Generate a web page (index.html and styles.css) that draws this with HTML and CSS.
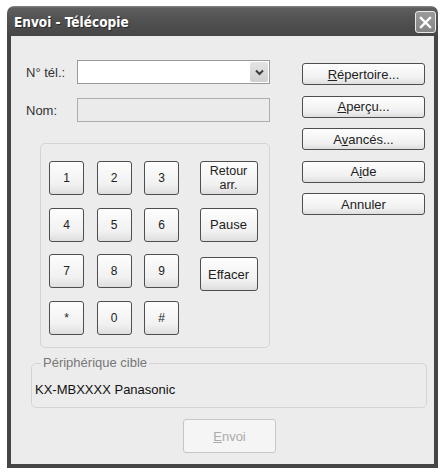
FILE: index.html
```html
<!DOCTYPE html>
<html lang="fr">
<head>
    <meta charset="UTF-8">
    <title>Envoi - Télécopie</title>
    <link rel="stylesheet" href="styles.css">
</head>
<body>

    <div class="window">
        <div class="titlebar">
            <span class="title">Envoi - Télécopie</span>
            <button class="close">
                <svg width="13" height="13" viewBox="0 0 13 13">
                    <path d="M2 2 L11 11 M11 2 L2 11" stroke="#fff" stroke-width="2.4" stroke-linecap="square"/>
                </svg>
            </button>
        </div>

        <div class="body">
            <div class="main">
                <div class="left">
                    <div class="field">
                        <label>N° tél.:</label>
                        <div class="combo">
                            <span class="combo-btn">
                                <svg width="9" height="7" viewBox="0 0 9 7">
                                    <path d="M1 1.5 L4.5 5 L8 1.5" fill="none" stroke="#3c3c3c" stroke-width="2"/>
                                </svg>
                            </span>
                        </div>
                    </div>
                    <div class="field">
                        <label>Nom:</label>
                        <div class="textbox"></div>
                    </div>

                    <!-- clavier -->
                    <div class="keypad">
                        <button class="key">1</button>
                        <button class="key">2</button>
                        <button class="key">3</button>
                        <button class="key wide two-lines">Retour<br>arr.</button>
                        <button class="key">4</button>
                        <button class="key">5</button>
                        <button class="key">6</button>
                        <button class="key wide">Pause</button>
                        <button class="key">7</button>
                        <button class="key">8</button>
                        <button class="key">9</button>
                        <button class="key wide clear">Effacer</button>
                        <button class="key">*</button>
                        <button class="key">0</button>
                        <button class="key">#</button>
                    </div>
                </div>

                <div class="side">
                    <button class="btn"><u>R</u>épertoire...</button>
                    <button class="btn"><u>A</u>perçu...</button>
                    <button class="btn">A<u>v</u>ancés...</button>
                    <button class="btn">A<u>i</u>de</button>
                    <button class="btn">Annuler</button>
                </div>
            </div>

            <fieldset class="target">
                <legend>Périphérique cible</legend>
                <div class="device">KX-MBXXXX Panasonic</div>
            </fieldset>

            <div class="footer">
                <button class="btn send" disabled><u>E</u>nvoi</button>
            </div>
        </div>
    </div>

</body>
</html>
```

FILE: styles.css
```css
body {
    margin: 0;
    background: #ffffff;
    font-family: "Liberation Sans", Arial, sans-serif;
    font-size: 13px;
    color: #222;
}
.window {
    margin: 6px 0 0 7px;
    width: 431px;
    display: flex;
    flex-direction: column;
}
.titlebar {
    height: 30px;
    box-sizing: border-box;
    border-radius: 7px 7px 0 0;
    background: linear-gradient(#8a8a8a 0, #5e5e5e 2px, #535353 40%, #464646 100%);
    display: flex;
    align-items: center;
    padding: 0 2px 0 7px;
}
.title {
    color: #ffffff;
    font-family: "DejaVu Sans Condensed", "DejaVu Sans", sans-serif;
    font-stretch: condensed;
    font-weight: bold;
    font-size: 13.5px;
    text-shadow: 1px 1px 0 #2a2a2a;
    margin-top: 2px;
}
.close {
    margin: 2px 0 0 auto;
    width: 21px;
    height: 22px;
    padding: 0;
    border: 1px solid #e8e8e8;
    border-radius: 3px;
    background: linear-gradient(#9a9a9a, #858585);
    display: flex;
    align-items: center;
    justify-content: center;
}
.body {
    height: 432px;
    box-sizing: border-box;
    border: 4px solid #454545;
    border-top: 0;
    background: #ececec;
}
.main {
    display: flex;
    padding-top: 24px;
}
.left {
    margin-left: 15px;
    width: 276px;
}
.field {
    display: flex;
    align-items: center;
    height: 24px;
}
.field + .field {
    margin-top: 14px;
}
.field label {
    width: 51px;
    color: #333;
}
.combo, .textbox {
    width: 193px;
    height: 24px;
    box-sizing: border-box;
    border: 1px solid #9a9a9a;
}
.combo {
    background: #ffffff;
    display: flex;
    justify-content: flex-end;
    align-items: center;
    padding-right: 1px;
}
.combo-btn {
    width: 18px;
    height: 20px;
    border-radius: 2px;
    background: linear-gradient(#e4e4e4, #d0d0d0);
    display: flex;
    align-items: center;
    justify-content: center;
}
.textbox {
    background: #ebebeb;
    border-color: #adadad;
}
.keypad {
    margin: 21px 0 0 14px;
    width: 230px;
    height: 205px;
    box-sizing: border-box;
    border: 1px solid #d4d4d4;
    border-radius: 5px;
    padding: 17px 0 0 8px;
    display: grid;
    grid-template-columns: 35px 35px 35px 66px;
    grid-template-rows: repeat(4, 34px);
    column-gap: 12.5px;
    row-gap: 12.5px;
}
button {
    font-family: "Liberation Sans", Arial, sans-serif;
    font-size: 13px;
    color: #222;
}
.key, .btn {
    padding: 0;
    border: 1px solid #4e4e4e;
    border-radius: 3px;
    background: linear-gradient(#fdfdfd, #f1f1f1 70%, #dedede);
}
.key {
    width: 35px;
    height: 34px;
    font-size: 12px;
}
.key.wide {
    width: 58px;
    justify-self: end;
    font-size: 13px;
}
.key.two-lines {
    font-size: 12.5px;
    line-height: 14px;
}
.clear {
    margin-top: 3px;
}
.side {
    padding-top: 3px;
    display: flex;
    flex-direction: column;
    gap: 10.5px;
}
.btn {
    width: 123px;
    height: 22px;
}
.target {
    margin: 8px 0 0 20px;
    width: 396px;
    box-sizing: border-box;
    border: 1px solid #d4d4d4;
    border-radius: 5px;
    padding: 12px 0 10px 3px;
}
.target legend {
    margin-left: 6px;
    padding: 0 2px;
    line-height: 14px;
    color: #777;
}
.device {
    color: #111;
}
.footer {
    padding: 11px 0 0 172px;
}
.btn.send {
    width: 93px;
    height: 34px;
    border-color: #c6c6c6;
    background: #f5f5f5;
    color: #ababab;
}
```
